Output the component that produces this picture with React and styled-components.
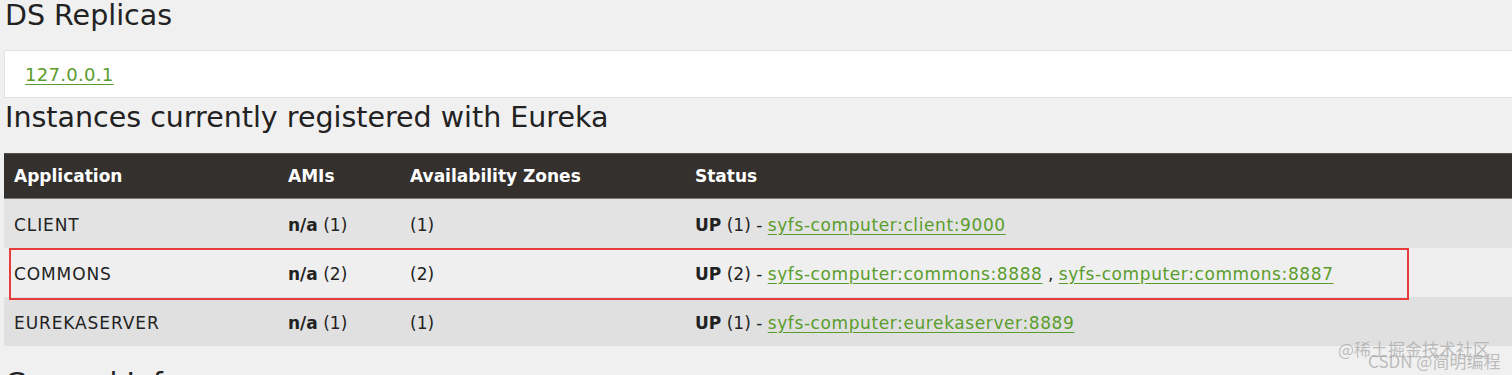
import React from "react";
import styled, { createGlobalStyle } from "styled-components";

const GlobalStyle = createGlobalStyle`
  html, body {
    margin: 0;
    padding: 0;
    background: #f0f0f0;
    overflow: hidden;
  }
  body {
    font-family: "DejaVu Sans", "Noto Sans", sans-serif;
    color: #222;
  }
`;

const Page = styled.div`
  position: relative;
  width: 1512px;
  height: 375px;
  padding-left: 4px;
  box-sizing: border-box;
  overflow: hidden;
`;

const Heading = styled.h1`
  margin: ${(p) => p.$mt || 0}px 0 0;
  padding-left: 1px;
  font-size: 28.5px;
  font-weight: 400;
  line-height: ${(p) => p.$lh || "32px"};
  color: #222;
`;

const ReplicaBox = styled.div`
  margin-top: 18px;
  height: 46px;
  background: #fff;
  border: 1px solid #e2e2e2;
  border-right: none;
  display: flex;
  align-items: center;
  padding-left: 20px;
`;

const Link = styled.a`
  color: #5a9d2c;
  text-decoration: underline;
  text-underline-offset: 3px;
  font-size: ${(p) => p.$size || 17}px;
  letter-spacing: ${(p) => (p.$size ? 0.3 : 0.6)}px;
  cursor: pointer;
`;

const Table = styled.div`
  margin-top: 19px;
  width: 1600px;
`;

const Row = styled.div`
  display: grid;
  grid-template-columns: 274px 122px 285px 1fr;
  height: ${(p) => (p.$head ? "44px" : "49px")};
  align-items: center;
  background: ${(p) => p.$bg};
  color: ${(p) => (p.$head ? "#fff" : "#222")};
  font-size: 17px;
  border-top: ${(p) => (p.$head ? "1px solid #555" : "none")};
  border-bottom: ${(p) => (p.$head ? "1px solid #777" : "none")};
`;

const Cell = styled.div`
  padding-left: 10px;
  padding-top: ${(p) => (p.$bold ? 0 : 2)}px;
  white-space: nowrap;
  font-weight: ${(p) => (p.$bold ? 700 : 400)};
  letter-spacing: ${(p) => (p.$caps ? 0.9 : 0)}px;
  b {
    font-weight: 700;
  }
`;

const Highlight = styled.div`
  position: absolute;
  left: 9px;
  top: 248px;
  width: 1400px;
  height: 52px;
  border: 2px solid #e63c3c;
  box-sizing: border-box;
  pointer-events: none;
`;

const Watermark = styled.div`
  position: absolute;
  left: 1338px;
  top: 339px;
  font-family: "Noto Sans CJK SC", sans-serif;
  font-size: 17px;
  color: rgba(170, 170, 170, 0.75);
  line-height: 20px;
`;

const WaterLine = styled.div`
  margin-left: ${(p) => p.$offset || 0}px;
  margin-top: ${(p) => p.$top || 0}px;
  white-space: nowrap;
`;

const rows = [
  { app: "CLIENT", n: 1, bg: "#e3e3e3", links: ["syfs-computer:client:9000"] },
  {
    app: "COMMONS",
    n: 2,
    bg: "#efefef",
    links: ["syfs-computer:commons:8888", "syfs-computer:commons:8887"],
  },
  { app: "EUREKASERVER", n: 1, bg: "#e0e0e0", links: ["syfs-computer:eurekaserver:8889"] },
];

export default function App() {
  return (
    <>
      <GlobalStyle />
      <Page>
        <Heading>DS Replicas</Heading>
        <ReplicaBox>
          <Link $size={18}>127.0.0.1</Link>
        </ReplicaBox>
        <Heading $mt={4}>Instances currently registered with Eureka</Heading>
        <Table>
          <Row $head $bg="#33302d">
            <Cell $bold>Application</Cell>
            <Cell $bold>AMIs</Cell>
            <Cell $bold>Availability Zones</Cell>
            <Cell $bold>Status</Cell>
          </Row>
          {rows.map((r) => (
            <Row key={r.app} $bg={r.bg}>
              <Cell $caps>{r.app}</Cell>
              <Cell>
                <b>n/a</b> ({r.n})
              </Cell>
              <Cell>({r.n})</Cell>
              <Cell>
                <b>UP</b> ({r.n}) -{" "}
                {r.links.map((l, i) => (
                  <React.Fragment key={l}>
                    {i > 0 && " , "}
                    <Link>{l}</Link>
                  </React.Fragment>
                ))}
              </Cell>
            </Row>
          ))}
        </Table>
        <Heading $lh="76px">General Info</Heading>
        <Highlight />
        <Watermark>
          <WaterLine>@稀土掘金技术社区</WaterLine>
          <WaterLine $offset={30} $top={-8}>CSDN @简明编程</WaterLine>
        </Watermark>
      </Page>
    </>
  );
}
